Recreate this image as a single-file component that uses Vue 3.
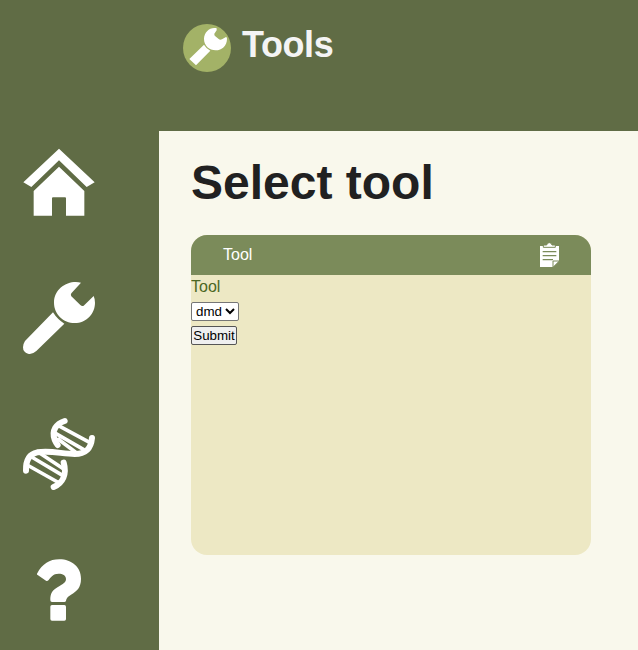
<script setup>
import { ref } from 'vue'
const tool = ref('dmd')
</script>

<template>
  <div class="page">
    <nav class="sidebar">
      <a class="nav-item" aria-label="Home">
        <svg viewBox="39 33 216 216">
          <path d="M147 41 254 142 230 156 147 76 64 156 40 142Z" />
          <path d="M147 95 223 168V242H168V190Q168 187 165 187H129Q126 187 126 190V242H71V168Z" />
        </svg>
      </a>
      <a class="nav-item" aria-label="Tools">
        <svg viewBox="39 36 216 216">
          <path d="M213 38C176 29 132 54 132 98C132 132 160 159 194 159C230 159 255 131 255 98Q255 87 251 78L221 107Q216 110 211 105L184 79Q181 75 184 70Z" />
          <path d="M129 127Q142 148 163 161L79 243Q67 254 54 251Q39 247 39 232Q39 222 45 213Z" />
        </svg>
      </a>
      <a class="nav-item" aria-label="DNA">
        <svg viewBox="39 39 216 216" class="strokes">
          <path class="strand" d="M164 48C138 56 124 78 134 104Q138 113 143 120M246 99C243 130 229 147 194 147C157 147 124 136 82 142C57 147 47 166 48 197M161 173C171 207 159 234 131 246" />
          <path class="rung" d="M151 65 240 113M138 86 220 133M145 103 196 141M90 145 161 192M70 159 159 212M57 183 148 234" />
        </svg>
      </a>
      <a class="nav-item" aria-label="Help">
        <svg viewBox="39 27 216 216">
          <path d="M81 86C98 56 118 43 148 43C186 43 213 67 213 101C213 128 200 139 183 149C170 157 170 161 168 167Q167 171 163 171H126Q121 171 121 166C120 145 128 134 145 125C159 117 168 112 168 102C168 91 158 86 146 86C129 86 122 97 116 105Q112 109 108 107L83 90Q80 88 81 86Z" />
          <rect x="121" y="180" width="47" height="47" rx="5" />
        </svg>
      </a>
    </nav>
    <div class="main">
      <header class="topbar">
        <svg class="badge" viewBox="39 42 144 144">
          <circle cx="111" cy="114" r="72" fill="#a3b267" />
          <path fill="#fff" d="M140 55C121 50 102 66 102 87C102 107 118 121 137 121C156 121 171 107 171 86Q171 82 168 81L156 88Q150 91 146 87L136 79Q132 76 133 71L140 61ZM102 104Q108 115 121 122L78 166 58 147Z" />
        </svg>
        <span class="title">Tools</span>
      </header>
      <main class="content">
        <h1>Select tool</h1>
        <section class="card">
          <div class="card-head">
            <span>Tool</span>
            <svg class="clip" viewBox="54 54 72 72">
              <path fill="#fff" d="M60 63H117V108L98 126H60Z" />
              <path fill="#fff" stroke="#7b8b5a" stroke-width="3" d="M70 67V60H80Q81 53 88 53Q95 53 96 60H106V67Z" />
              <path fill="none" stroke="#7b8b5a" stroke-width="4" d="M68 80H109M68 92H109M68 104H99" />
              <path fill="#fff" stroke="#7b8b5a" stroke-width="3" d="M99 127V108H118Z" />
            </svg>
          </div>
          <form class="card-body" @submit.prevent>
            <label for="tool">Tool</label>
            <select id="tool" v-model="tool"><option>dmd</option></select>
            <button type="submit">Submit</button>
          </form>
        </section>
      </main>
    </div>
  </div>
</template>

<style>
body { margin: 0; overflow: hidden; }
</style>

<style scoped>
.page {
  display: flex;
  height: 650px;
  background: #f9f8ec;
  font-family: "Liberation Sans", Arial, sans-serif;
  font-size: 16px;
}
.sidebar {
  box-sizing: border-box;
  width: 159px;
  flex: none;
  padding: 146px 0 0 23px;
  background: #606c45;
  display: flex;
  flex-direction: column;
  gap: 64px;
}
.nav-item, .nav-item svg { display: block; width: 72px; height: 72px; }
.nav-item svg { fill: #fff; overflow: visible; }
.nav-item .strokes { fill: none; stroke: #fff; stroke-linecap: round; }
.strand { stroke-width: 18; }
.rung { stroke-width: 11; }
.main { flex: 1; min-width: 0; }
.topbar {
  box-sizing: border-box;
  height: 131px;
  padding: 24px 24px 0;
  background: #606c45;
  display: flex;
  align-items: flex-start;
  gap: 11px;
}
.badge { width: 48px; height: 48px; flex: none; }
.title { font-size: 36px; line-height: 41px; font-weight: bold; letter-spacing: -0.4px; color: #f4f4f4; }
.content { padding: 24px 32px 0; }
h1 { margin: 0 0 25px; font-size: 48px; line-height: 55px; color: #212121; }
.card {
  width: 400px;
  height: 320px;
  border-radius: 16px;
  overflow: hidden;
  background: #ede8c4;
}
.card-head {
  box-sizing: border-box;
  height: 40px;
  padding: 0 29px 0 32px;
  background: #7b8b5a;
  color: #fff;
  display: flex;
  align-items: center;
  justify-content: space-between;
}
.clip { width: 24px; height: 24px; overflow: visible; }
.card-body {
  display: flex;
  flex-direction: column;
  align-items: flex-start;
  color: #4b6723;
}
label { line-height: 18px; margin: 3px 0 6px; }
select, button {
  box-sizing: border-box;
  font: 13.333px "Liberation Sans", Arial, sans-serif;
  height: 19px;
  color: #000;
}
select { width: 48px; margin: 0 0 5px; background: #fff; border: 1px solid #767676; border-radius: 2px; padding: 0; }
button { width: 46px; margin: 0; padding: 0; background: #efefef; border: 1px solid #555; border-radius: 2px; }
</style>
